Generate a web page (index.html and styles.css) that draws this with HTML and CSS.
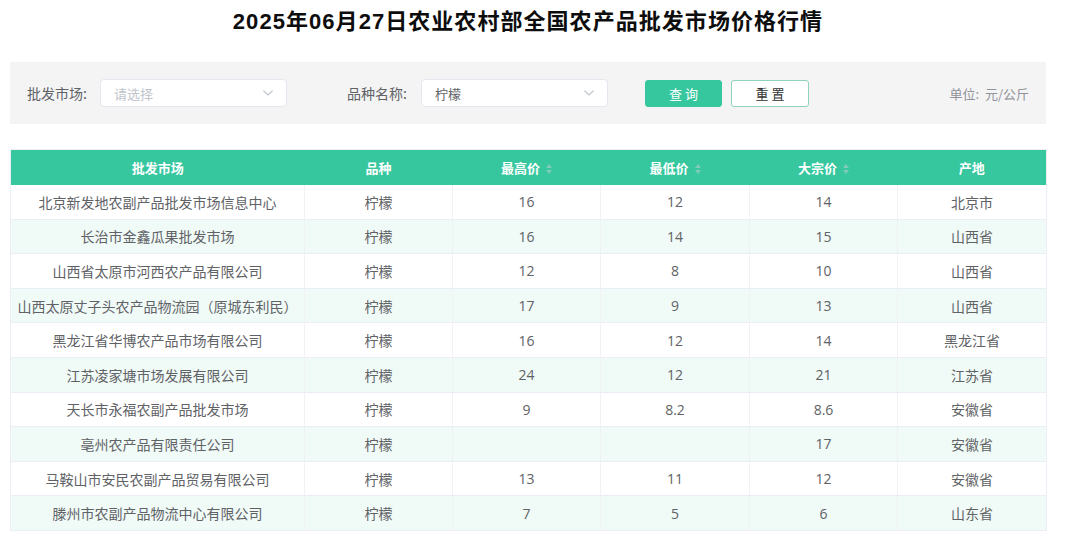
FILE: index.html
```html
<!DOCTYPE html>
<html lang="zh-CN">
<head>
<meta charset="utf-8">
<title>价格行情</title>
<link rel="stylesheet" href="styles.css">
</head>
<body>
<div class="page">
  <h1 class="title">2025年06月27日农业农村部全国农产品批发市场价格行情</h1>
  <div class="filter">
    <span class="label">批发市场:</span>
    <div class="select"><span class="placeholder">请选择</span><svg class="chev" width="12" height="8" viewBox="0 0 12 8"><path d="M1.5 1.8 L6 6 L10.5 1.8" fill="none" stroke="#c0c4cc" stroke-width="1.2"/></svg></div>
    <span class="label label2">品种名称:</span>
    <div class="select"><span class="value">柠檬</span><svg class="chev" width="12" height="8" viewBox="0 0 12 8"><path d="M1.5 1.8 L6 6 L10.5 1.8" fill="none" stroke="#c0c4cc" stroke-width="1.2"/></svg></div>
    <button class="btn btn-primary">查 询</button>
    <button class="btn btn-plain">重 置</button>
    <span class="unit">单位:&nbsp; 元/公斤</span>
  </div>
  <table class="grid">
    <colgroup>
      <col style="width:294px"><col style="width:148px"><col style="width:148px"><col style="width:149px"><col style="width:148px"><col style="width:149px">
    </colgroup>
    <thead>
      <tr>
        <th>批发市场</th>
        <th>品种</th>
        <th>最高价<span class="caret"><i class="up"></i><i class="down"></i></span></th>
        <th>最低价<span class="caret"><i class="up"></i><i class="down"></i></span></th>
        <th>大宗价<span class="caret"><i class="up"></i><i class="down"></i></span></th>
        <th>产地</th>
      </tr>
    </thead>
    <tbody>
      <tr><td>北京新发地农副产品批发市场信息中心</td><td>柠檬</td><td>16</td><td>12</td><td>14</td><td>北京市</td></tr>
      <tr><td>长治市金鑫瓜果批发市场</td><td>柠檬</td><td>16</td><td>14</td><td>15</td><td>山西省</td></tr>
      <tr><td>山西省太原市河西农产品有限公司</td><td>柠檬</td><td>12</td><td>8</td><td>10</td><td>山西省</td></tr>
      <tr><td>山西太原丈子头农产品物流园（原城东利民）</td><td>柠檬</td><td>17</td><td>9</td><td>13</td><td>山西省</td></tr>
      <tr><td>黑龙江省华博农产品市场有限公司</td><td>柠檬</td><td>16</td><td>12</td><td>14</td><td>黑龙江省</td></tr>
      <tr><td>江苏凌家塘市场发展有限公司</td><td>柠檬</td><td>24</td><td>12</td><td>21</td><td>江苏省</td></tr>
      <tr><td>天长市永福农副产品批发市场</td><td>柠檬</td><td>9</td><td>8.2</td><td>8.6</td><td>安徽省</td></tr>
      <tr><td>亳州农产品有限责任公司</td><td>柠檬</td><td></td><td></td><td>17</td><td>安徽省</td></tr>
      <tr><td>马鞍山市安民农副产品贸易有限公司</td><td>柠檬</td><td>13</td><td>11</td><td>12</td><td>安徽省</td></tr>
      <tr><td>滕州市农副产品物流中心有限公司</td><td>柠檬</td><td>7</td><td>5</td><td>6</td><td>山东省</td></tr>
    </tbody>
  </table>
</div>
</body>
</html>
```

FILE: styles.css
```css
* { box-sizing: border-box; }
html, body { margin: 0; padding: 0; background: #ffffff; }
body {
  font-family: "Open Sans", "Noto Sans CJK SC", sans-serif;
  color: #606266;
}
.page {
  width: 1036px;
  margin-left: 10px;
}
.title {
  margin: 0;
  height: 42px;
  padding-top: 7px;
  text-align: center;
  font-family: "Liberation Sans", "Noto Sans CJK SC", sans-serif;
  font-weight: 700;
  font-size: 22px;
  line-height: 30px;
  letter-spacing: 1.05px;
  color: #0d0d0d;
}
.filter {
  margin-top: 20px;
  height: 62px;
  background: #f4f4f5;
  display: flex;
  align-items: center;
  padding: 0 17px;
}
.label {
  font-family: "Noto Sans CJK SC", sans-serif;
  font-size: 14px;
  color: #606266;
  width: 73px;
}
.label2 { margin-left: 60px; width: 74px; }
.select {
  width: 187px;
  height: 28px;
  background: #ffffff;
  border: 1px solid #e4e7ed;
  border-radius: 4px;
  display: flex;
  align-items: center;
  justify-content: space-between;
  padding: 0 12px 0 13px;
  font-family: "Noto Sans CJK SC", sans-serif;
  font-size: 13px;
}
.placeholder { color: #c0c4cc; }
.value { color: #606266; }
.chev { display: block; }
.btn {
  height: 27px;
  border-radius: 3px;
  font-family: "Noto Sans CJK SC", sans-serif;
  font-size: 13px;
  padding: 0;
  cursor: pointer;
}
.btn-primary {
  margin-left: 37px;
  width: 77px;
  background: #36c79f;
  border: 1px solid #36c79f;
  color: #ffffff;
}
.btn-plain {
  margin-left: 9px;
  width: 78px;
  background: #ffffff;
  border: 1px solid #8fd3bf;
  color: #333333;
}
.unit {
  margin-left: auto;
  font-family: "Noto Sans CJK SC", sans-serif;
  font-size: 13px;
  color: #909399;
}
.grid {
  margin-top: 25px;
  width: 1036px;
  table-layout: fixed;
  border-collapse: collapse;
  border: 1px solid #ebeef5;
}
.grid th {
  height: 35px;
  background: #36c79f;
  color: #ffffff;
  font-family: "Noto Sans CJK SC", sans-serif;
  font-weight: 700;
  font-size: 13px;
  text-align: center;
  padding: 0;
  border: none;
}
.caret {
  display: inline-flex;
  flex-direction: column;
  vertical-align: middle;
  margin-left: 6px;
  gap: 2px;
}
.caret i {
  display: block;
  width: 0;
  height: 0;
  border-left: 3.5px solid transparent;
  border-right: 3.5px solid transparent;
}
.caret .up { border-bottom: 4px solid rgba(200, 210, 210, 0.5); }
.caret .down { border-top: 4px solid rgba(200, 210, 210, 0.5); }
.grid td {
  height: 34.6px;
  padding: 0;
  text-align: center;
  font-size: 14px;
  color: #606266;
  border-right: 1px solid #f0f2f5;
  border-bottom: 1px solid #ebeef5;
  white-space: nowrap;
}
.grid td:last-child { border-right: none; }
.grid tbody tr:nth-child(even) td { background: #f0faf7; }
```
